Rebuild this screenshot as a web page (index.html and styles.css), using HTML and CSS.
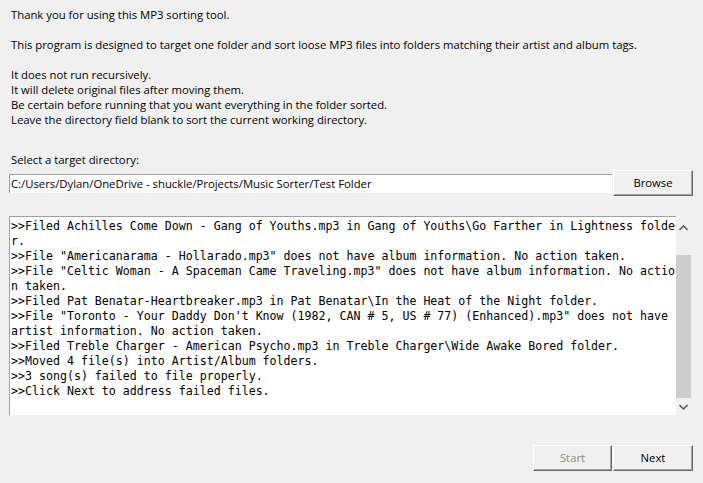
FILE: index.html
```html
<!DOCTYPE html>
<html>
<head>
<meta charset="utf-8">
<link rel="stylesheet" href="styles.css">
</head>
<body>
<div class="app">
  <div class="intro">
    <div class="line">Thank you for using this MP3 sorting tool.</div>
    <div class="line blank"></div>
    <div class="line">This program is designed to target one folder and sort loose MP3 files into folders matching their artist and album tags.</div>
    <div class="line blank"></div>
    <div class="line">It does not run recursively.</div>
    <div class="line">It will delete original files after moving them.</div>
    <div class="line">Be certain before running that you want everything in the folder sorted.</div>
    <div class="line">Leave the directory field blank to sort the current working directory.</div>
  </div>
  <div class="label">Select a target directory:</div>
  <div class="dir-row">
    <div class="entry">C:/Users/Dylan/OneDrive - shuckle/Projects/Music Sorter/Test Folder</div>
    <div class="btn browse">Browse</div>
  </div>
  <div class="log-wrap">
    <div class="log">
<div class="ll">&gt;&gt;Filed Achilles Come Down - Gang of Youths.mp3 in Gang of Youths\Go Farther in Lightness folde</div>
<div class="ll">r.</div>
<div class="ll">&gt;&gt;File "Americanarama - Hollarado.mp3" does not have album information. No action taken.</div>
<div class="ll">&gt;&gt;File "Celtic Woman - A Spaceman Came Traveling.mp3" does not have album information. No actio</div>
<div class="ll">n taken.</div>
<div class="ll">&gt;&gt;Filed Pat Benatar-Heartbreaker.mp3 in Pat Benatar\In the Heat of the Night folder.</div>
<div class="ll">&gt;&gt;File "Toronto - Your Daddy Don't Know (1982, CAN # 5, US # 77) (Enhanced).mp3" does not have</div>
<div class="ll">artist information. No action taken.</div>
<div class="ll">&gt;&gt;Filed Treble Charger - American Psycho.mp3 in Treble Charger\Wide Awake Bored folder.</div>
<div class="ll">&gt;&gt;Moved 4 file(s) into Artist/Album folders.</div>
<div class="ll">&gt;&gt;3 song(s) failed to file properly.</div>
<div class="ll">&gt;&gt;Click Next to address failed files.</div>
    </div>
    <div class="scrollbar">
      <div class="arrow up"><svg width="9" height="6" viewBox="0 0 9 6"><path d="M0.5 5 L4.5 1 L8.5 5" fill="none" stroke="#606060" stroke-width="1.6"/></svg></div>
      <div class="track"><div class="thumb"></div></div>
      <div class="arrow down"><svg width="9" height="6" viewBox="0 0 9 6"><path d="M0.5 1 L4.5 5 L8.5 1" fill="none" stroke="#606060" stroke-width="1.6"/></svg></div>
    </div>
  </div>
  <div class="actions">
    <div class="btn disabled">Start</div>
    <div class="btn">Next</div>
  </div>
</div>
</body>
</html>
```

FILE: styles.css
```css
html, body {
  margin: 0;
  padding: 0;
  background: #f0f0f0;
}
.app {
  width: 703px;
  height: 483px;
  box-sizing: border-box;
  padding: 7px 10px 0 9px;
  font-family: "Open Sans", "Noto Sans", sans-serif;
  font-size: 11.3px;
  color: #000;
}
.intro {
  padding-left: 2px;
}
.line {
  height: 15px;
  line-height: 15px;
  white-space: nowrap;
}
.label {
  margin-top: 25px;
  padding-left: 2px;
  height: 15px;
  line-height: 15px;
}
.dir-row {
  display: flex;
  align-items: center;
  margin-top: 3px;
  height: 26px;
}
.entry {
  width: 603px;
  height: 19px;
  box-sizing: border-box;
  background: #fff;
  border-top: 1px solid #a0a0a0;
  border-left: 1px solid #a0a0a0;
  padding-left: 1px;
  line-height: 17px;
  white-space: nowrap;
  overflow: hidden;
  margin-right: 1px;
}
.btn {
  width: 80px;
  height: 26px;
  box-sizing: border-box;
  background: #f0f0f0;
  border-top: 1px solid #fff;
  border-left: 1px solid #fff;
  border-right: 1px solid #696969;
  border-bottom: 1px solid #696969;
  box-shadow: inset -1px -1px 0 #a0a0a0;
  display: flex;
  align-items: center;
  justify-content: center;
  padding-bottom: 1px;
}
.btn.disabled {
  color: #8a8a8a;
}
.log-wrap {
  display: flex;
  margin-top: 20px;
  height: 199px;
}
.log {
  width: 669px;
  box-sizing: border-box;
  background: #fff;
  border-top: 1px solid #a0a0a0;
  border-left: 1px solid #a0a0a0;
  padding: 2px 0 0 1px;
  font-family: "DejaVu Sans Mono", "Liberation Mono", monospace;
  font-size: 11.62px;
  overflow: hidden;
}
.ll {
  height: 15px;
  line-height: 15px;
  white-space: pre;
}
.scrollbar {
  width: 17px;
  display: flex;
  flex-direction: column;
  background: #f0f0f0;
}
.arrow {
  height: 17px;
  width: 15px;
  display: flex;
  align-items: center;
  justify-content: center;
}
.arrow.up {
  margin-top: 3px;
}
.track {
  flex: 1;
  padding: 19px 0 0 0;
}
.thumb {
  width: 15px;
  height: 143px;
  background: #cdcdcd;
}
.actions {
  display: flex;
  justify-content: flex-end;
  gap: 1px;
  margin-top: 30px;
  padding-right: 0;
}
.actions .btn {
  width: 79px;
}
.actions .btn:last-child {
  width: 80px;
}
```
